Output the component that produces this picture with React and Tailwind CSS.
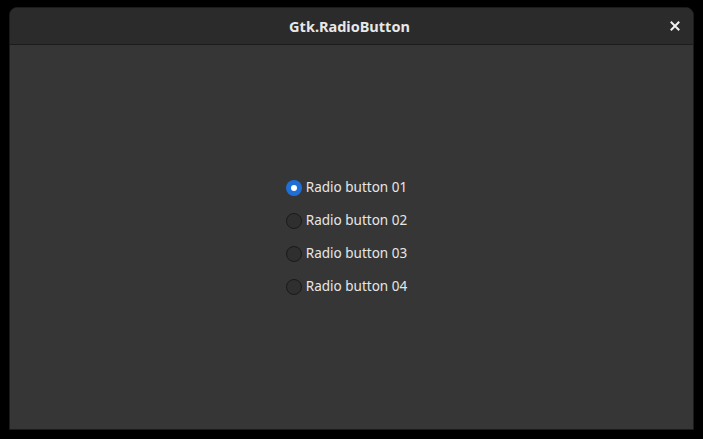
export default function App() {
  const items = ['Radio button 01', 'Radio button 02', 'Radio button 03', 'Radio button 04'];
  return (
    <div className="w-[703px] h-[439px] bg-black pl-[9px] pt-[7px] font-['Noto_Sans',sans-serif]">
      <div className="w-[685px] h-[423px] rounded-t-[8px] border border-[#1b1b1b] bg-[#363636] flex flex-col overflow-hidden">
        {/* Titlebar */}
        <div className="h-[37px] shrink-0 bg-[#2b2b2b] border-b border-[#1c1c1c] relative flex items-center justify-center">
          <span className="text-[14.5px] font-bold text-[#e8e8e8] mt-[1px] mr-[4px]">Gtk.RadioButton</span>
          <svg className="absolute right-[13px] top-[13px]" width="10" height="10" viewBox="0 0 10 10">
            <path d="M1.5 1.5 L8.5 8.5 M8.5 1.5 L1.5 8.5" stroke="#f0f0f0" strokeWidth="2" strokeLinecap="square" />
          </svg>
        </div>

        {/* Content */}
        <div className="flex-1 flex items-center justify-center">
          <div className="flex flex-col gap-[13px] mr-[10px]">
            {items.map((label, i) => (
              <div key={label} className="flex items-center gap-[4px] h-[20px]">
                {i === 0 ? (
                  <span className="w-[16px] h-[16px] rounded-full bg-[#1f6fd6] flex items-center justify-center">
                    <span className="w-[6px] h-[6px] rounded-full bg-white" />
                  </span>
                ) : (
                  <span className="w-[16px] h-[16px] rounded-full border border-[#1a1a1a] bg-[#2f2f2f]" />
                )}
                <span className="text-[13.5px] text-[#e6e6e6]">{label}</span>
              </div>
            ))}
          </div>
        </div>
      </div>
    </div>
  );
}
